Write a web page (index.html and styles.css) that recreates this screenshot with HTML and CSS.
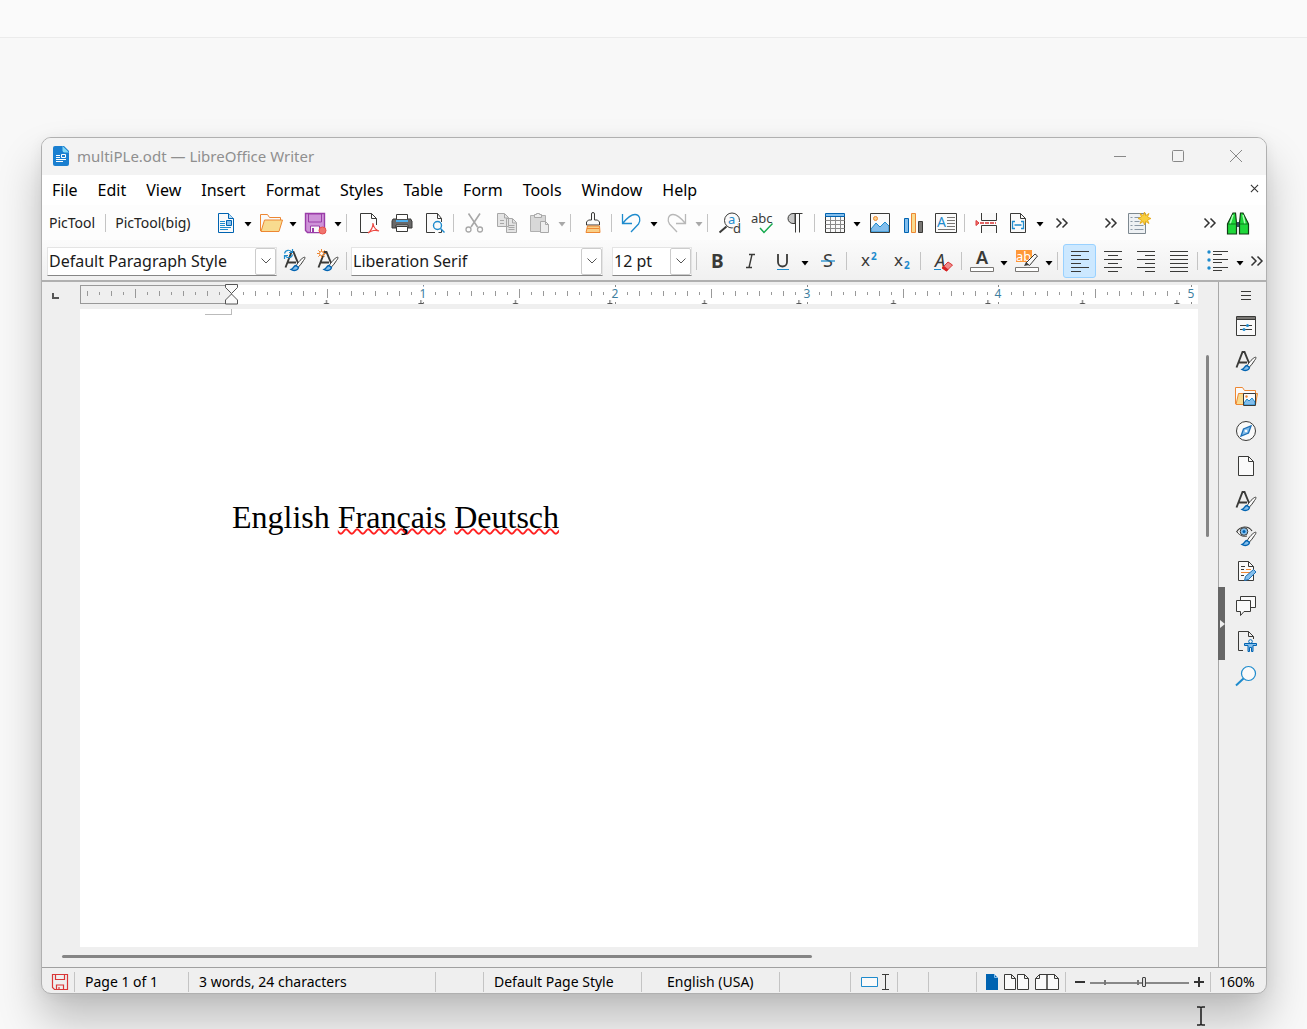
FILE: index.html
```html
<!DOCTYPE html>
<html lang="en">
<head>
<meta charset="utf-8">
<title>multiPLe.odt — LibreOffice Writer</title>
<link rel="stylesheet" href="styles.css">
</head>
<body>
<svg class="sprite" aria-hidden="true">
  <symbol id="down" viewBox="0 0 8 5"><path d="M.5 0h7L4 4.500z" fill="currentColor"/></symbol>
  <symbol id="more" viewBox="0 0 14 12"><path d="M1.500 1.500 6 6l-4.500 4.500M7.500 1.500 12 6l-4.500 4.500" fill="none" stroke="#333" stroke-width="1.500"/></symbol>
  <symbol id="chevron" viewBox="0 0 10 6"><path d="M.5.500 5 5 9.500.500" fill="none" stroke="#555" stroke-width="1"/></symbol>
  <symbol id="brushA" viewBox="0 0 24 24"><path d="M2.500 18.500 8.500 3h2l4.500 11M5 13.500h8" fill="none" stroke="#3a3a38" stroke-width="1.900"/><path d="M13 17c2-4 6-8 8.500-9 .8.500.3 2-1 3.500-1.500 2.500-3.500 5-5.500 7z" fill="#fafafa" stroke="#3a3a38"/><path d="M13 16.500c-2.500 0-2.500 3.500-5 4 2 1.500 7 1.500 7.500-2z" fill="#83beec" stroke="#0063b1" stroke-width="1.300"/></symbol>
</svg>

<header class="desk-strip"></header>
<div class="stage">
<main class="window">
  <div class="titlebar">
    <svg class="app-icon" viewBox="0 0 16 20"><path d="M2 0h9l5 5v13a2 2 0 0 1-2 2H2a2 2 0 0 1-2-2V2a2 2 0 0 1 2-2z" fill="#1a7fd0"/><path d="M9.500 0v4.500a2 2 0 0 0 2 2H16z" fill="#83d8f5"/><path d="M3 9.500h4M3 11.500h4M3 13.500h10M3 15.500h7M8.500 8.500h4v3h-4z" stroke="#fff" fill="none"/></svg>
    <h1>multiPLe.odt — LibreOffice Writer</h1>
    <button class="cap" aria-label="Minimize"><svg viewBox="0 0 14 14"><path d="M1 7.500h12" stroke="#888"/></svg></button>
    <button class="cap" aria-label="Maximize"><svg viewBox="0 0 14 14"><rect x="1.500" y="1.500" width="11" height="11" rx="1" fill="none" stroke="#888"/></svg></button>
    <button class="cap" aria-label="Close"><svg viewBox="0 0 14 14"><path d="m1 1 12 12M13 1 1 13" stroke="#888"/></svg></button>
  </div>

  <nav class="menubar">
    <button>File</button><button>Edit</button><button>View</button><button>Insert</button><button>Format</button><button>Styles</button><button>Table</button><button>Form</button><button>Tools</button><button>Window</button><button>Help</button>
    <button class="close-doc" aria-label="Close document"><svg viewBox="0 0 10 10"><path d="m1 1 8 8M9 1 1 9" stroke="#333" stroke-width="1.200"/></svg></button>
  </nav>

  <div class="toolbar standard">
    <div class="group pics"><button class="word">PicTool</button><i class="sep"></i><button class="word">PicTool(big)</button></div>
    <div class="group">
      <button class="tool" aria-label="New"><svg viewBox="0 0 24 24"><path d="M4.500 2.500h10l5 5v14h-15z" fill="#fafafa" stroke="#0063b1"/><path d="M14.500 2.500v5h5" fill="#b9dcf5" stroke="#0063b1"/><path d="M6 10.500h5M6 12.500h5M6 14.500h5M6 16.500h11M6 18.500h8" stroke="#1e8bcd"/><path d="M12.500 9.500h5v5h-5z" fill="#83beec" stroke="#0063b1"/></svg></button><button class="drop" aria-label="New options"><svg><use href="#down"/></svg></button>
      <button class="tool" aria-label="Open"><svg viewBox="0 0 24 24"><path d="M1.500 20V3.500h7l2 3h11v3" fill="#fafafa" stroke="#ed8733"/><path d="m2 20.500 3.500-11.500h18L20 20.500z" fill="#f8db8f" stroke="#ed8733"/></svg></button><button class="drop" aria-label="Open options"><svg><use href="#down"/></svg></button>
      <button class="tool" aria-label="Save"><svg viewBox="0 0 24 24"><path d="M1.500 2.500h19v19h-17l-2-2z" fill="#ce93d8" stroke="#9a3da8" stroke-width="1.400"/><path d="M4.500 3h13v8h-13z" fill="#ce93d8" stroke="#9a3da8"/><path d="M6.500 15h9v6.500h-9z" fill="#fafafa" stroke="#9a3da8"/><path d="M9 17v4" stroke="#9a3da8" stroke-width="2"/><circle cx="18.500" cy="19.500" r="3.500" fill="#f0756f" stroke="#e8504a"/></svg></button><button class="drop" aria-label="Save options"><svg><use href="#down"/></svg></button>
      <i class="sep wide"></i>
      <button class="tool" aria-label="Export as PDF"><svg viewBox="0 0 24 24"><path d="M11 21.500H3.500v-19h11l5 5V14M14.500 2.500v5h5" fill="none" stroke="#3a3a38"/><path d="M11 22c4-3 5-6 5-10 .5 5 3 7 6 8-3-1.500-8-.5-11 2z" fill="none" stroke="#ed4a44" stroke-width="1.200"/></svg></button>
      <button class="tool" aria-label="Print"><svg viewBox="0 0 24 24"><path d="M3 8h18v1l1 1v7h-4v-3H6v3H2v-7z" fill="#696969" stroke="#3a3a38"/><path d="M6.500 8V3.500h11V8" fill="#fff" stroke="#3a3a38"/><path d="M6 9h12v2H6z" fill="#4fb0ee"/><path d="M6.500 15.500h11v5h-11z" fill="#fff" stroke="#3a3a38"/></svg></button>
      <button class="tool" aria-label="Print preview"><svg viewBox="0 0 24 24"><path d="M12 21.500H3.500v-19h11l4 5V11M14.500 2.500v5h4M18.500 19v2.500h-3" fill="#fafafa" stroke="#3a3a38"/><circle cx="14.500" cy="14.500" r="4" fill="#fafafa" stroke="#1e8bcd" stroke-width="1.400"/><path d="m17.500 17.500 4 4" stroke="#1e8bcd" stroke-width="1.400"/></svg></button>
      <i class="sep"></i>
      <button class="tool" aria-label="Cut" disabled><svg viewBox="0 0 24 24"><path d="m6.500 2.500 9 13.500M18 2.500 9 16" stroke="#a8a8a8" stroke-width="1.600"/><circle cx="6.500" cy="18.500" r="2.500" fill="none" stroke="#a8a8a8" stroke-width="1.300"/><circle cx="18" cy="18.500" r="2.500" fill="none" stroke="#a8a8a8" stroke-width="1.300"/></svg></button>
      <button class="tool" aria-label="Copy" disabled><svg viewBox="0 0 24 24"><path d="M2.500 2.500h7l4 4v9h-11zM11.500 7.500h6l4 4v10h-10z" fill="#e4e4e4" stroke="#a8a8a8"/><path d="M9.500 3v4h4M17.500 8v4h4M5 9.500h4M5 12.500h4M13.500 14.500h6M13.500 16.500h6M13.500 18.500h6" fill="none" stroke="#a8a8a8"/></svg></button>
      <button class="tool" aria-label="Paste" disabled><svg viewBox="0 0 24 24"><path d="M2.500 4.500h15v16h-15z" fill="#d8d8d8" stroke="#b0b0b0"/><path d="M6.500 6.500v-3h2v-1h3v1h2v3zM12.500 10.500h5l3 3v8h-8z" fill="#eee" stroke="#a8a8a8"/><path d="M17.500 10.500v3h3" fill="none" stroke="#a8a8a8"/></svg></button><button class="drop" aria-label="Paste options" disabled><svg><use href="#down"/></svg></button>
      <i class="sep wide"></i>
      <button class="tool" aria-label="Clone formatting"><svg viewBox="0 0 24 24"><path d="M10.500 9V3a1.500 1.500 0 0 1 3 0v6h3l2 2v3h-13v-3l2-2z" fill="#fafafa" stroke="#3a3a38"/><path d="M6.500 15h12l.5 6.500H5z" fill="#f9cf87" stroke="#ed8733"/><path d="M6 17.500h12" stroke="#ed8733"/></svg></button>
      <i class="sep"></i>
      <button class="tool" aria-label="Undo"><svg viewBox="0 0 24 24"><path d="M2.500 3v9.500H12M2.500 12.500C7 7 11 3.500 15 3.500c5 0 6 6 3.500 9.500L11 21" fill="none" stroke="#1e8bcd" stroke-width="1.300"/></svg></button><button class="drop" aria-label="Undo history"><svg><use href="#down"/></svg></button>
      <button class="tool" aria-label="Redo" disabled><svg viewBox="0 0 24 24"><path d="M20.500 3v9.500H11M20.500 12.500C16 7 12 3.500 8 3.500c-5 0-6 6-3.500 9.500L12 21" fill="none" stroke="#b8b8b8" stroke-width="1.300"/></svg></button><button class="drop" aria-label="Redo history" disabled><svg><use href="#down"/></svg></button>
      <i class="sep wide"></i>
      <button class="tool" aria-label="Find and replace"><svg viewBox="0 0 24 24"><circle cx="14" cy="9.500" r="7.500" fill="#fafafa" stroke="#3a3a38"/><path d="m8.500 15.500-7 6" stroke="#3a3a38" stroke-width="2"/><text x="10" y="13" font-size="13" fill="#1e8bcd">a</text><text x="15" y="22" font-size="13" fill="#3a3a38" stroke="#fafafa" stroke-width="2" paint-order="stroke">d</text></svg></button>
      <button class="tool" aria-label="Spelling"><svg viewBox="0 0 24 24"><text x="0" y="12" font-size="13" fill="#3a3a38">abc</text><path d="m9 17 4 4.500 8.500-9" fill="none" stroke="#18ab50" stroke-width="1.500"/></svg></button>
      <button class="tool" aria-label="Formatting marks"><svg viewBox="0 0 24 24"><path d="M11 2.500H9a5 5 0 0 0 0 10h2z" fill="#c8c8c8" stroke="#3a3a38"/><path d="M9 2.500h9.500M11.500 2.500v19M15.500 2.500v19" stroke="#3a3a38"/></svg></button>
      <i class="sep"></i>
      <button class="tool" aria-label="Insert table"><svg viewBox="0 0 24 24"><path d="M2.500 3.500h19v18h-19z" fill="#fafafa" stroke="#3a3a38"/><path d="M2.500 9.500h19M2.500 13.500h19M2.500 17.500h19M7.500 6v15M12.500 6v15M17.500 6v15" stroke="#8a8a8a"/><path d="M2.500 2.500h19v3h-19z" fill="#83beec" stroke="#0063b1"/></svg></button><button class="drop" aria-label="Table size"><svg><use href="#down"/></svg></button>
      <button class="tool" aria-label="Insert image"><svg viewBox="0 0 24 24"><path d="M2.500 2.500h19v19h-19z" fill="#fafafa"/><path d="m3 18 5-6 4 4 5-5 4 4v6H3z" fill="#83beec" stroke="#1e8bcd"/><circle cx="7.500" cy="7.500" r="2" fill="#f9cf87" stroke="#ed8733"/><path d="M2.500 2.500h19v19h-19z" fill="none" stroke="#3a3a38"/></svg></button>
      <button class="tool" aria-label="Insert chart"><svg viewBox="0 0 24 24"><path d="M3.500 7.500h4v14h-4z" fill="#83beec" stroke="#0063b1"/><path d="M10.500 2.500h4v19h-4z" fill="#f8db8f" stroke="#ed8733"/><path d="M17.500 10.500h4v11h-4z" fill="#797774" stroke="#3a3a38"/></svg></button>
      <button class="tool" aria-label="Insert text box"><svg viewBox="0 0 24 24"><path d="M1.500 2.500h21v19h-21z" fill="#fafafa" stroke="#3a3a38"/><text x="3" y="16" font-size="14" fill="#1e8bcd">A</text><path d="M13 6.500h8M13 9.500h8M13 12.500h8M13 15.500h8M4 18.500h17" stroke="#797774"/></svg></button>
      <i class="sep"></i>
      <button class="tool" aria-label="Insert page break"><svg viewBox="0 0 24 24"><path d="M8.500 2v7.500h15V2M8.500 22v-7.500h15V22" fill="#fafafa" stroke="#3a3a38"/><path d="M7 12h16" stroke="#d93636" stroke-width="1.500" stroke-dasharray="4 1"/><path d="m3 9.500 3 2.500-3 2.500z" fill="#f27a7a" stroke="#d93636"/></svg></button>
      <button class="tool" aria-label="Insert field"><svg viewBox="0 0 24 24"><path d="M4.500 2.500h10l5 5v14h-15z" fill="#fafafa" stroke="#3a3a38"/><path d="M14.500 2.500v5h5" fill="none" stroke="#3a3a38"/><path d="M9 10.500H6.500v7H9M15 10.500h2.500v7H15M8.500 14h7" fill="none" stroke="#1e8bcd" stroke-width="1.300"/></svg></button><button class="drop" aria-label="Field options"><svg><use href="#down"/></svg></button>
      <button class="over" aria-label="More"><svg><use href="#more"/></svg></button>
    </div>
    <div class="group second">
      <button class="over" aria-label="More"><svg><use href="#more"/></svg></button>
      <button class="tool" aria-label="Autotext"><svg viewBox="0 0 24 24"><path d="M1.500 2.500h17v20h-17z" fill="#eef1f4" stroke="#7d8890"/><path d="M3.500 6.500h2M3.500 10.500h2M3.500 14.500h2M3.500 18.500h2M7.500 6.500h6M7.500 10.500h5M7.500 14.500h9M7.500 18.500h9" stroke="#8c99a6"/><path d="m17.500 1 1.200 3.500L22 2.500l-1.500 3.500 3.500 1.500-3.500 1.500L22 12.500l-3.300-2L17.500 14l-1.200-3.500-3.300 2L14.500 9 11 7.500 14.500 6 13 2.500l3.300 2z" fill="#f9cf3c" stroke="#e5a50a" stroke-width=".8"/></svg></button>
    </div>
    <div class="group last">
      <button class="over" aria-label="More"><svg><use href="#more"/></svg></button>
      <button class="tool" aria-label="Find"><svg viewBox="0 0 24 24"><path d="M10 11h4v5h-4z" fill="#3c4a6a"/><path d="M7 2h2.500l1 10v11H1.500V13zM17 2h-2.500l-1 10v11h9V13z" fill="#1fd83a" stroke="#123d16" stroke-width="1.200"/><path d="m7 4-3 9M17 4l2 9" stroke="#a9ffb2" stroke-width="1.500"/><path d="M2 13h8M14 13h8" stroke="#0b7a1c"/></svg></button>
    </div>
  </div>

  <div class="toolbar format">
    <label class="combo style"><select aria-label="Paragraph style"><option>Default Paragraph Style</option></select><span><svg><use href="#chevron"/></svg></span></label>
    <button class="tool" aria-label="Update style"><svg viewBox="0 0 24 24"><use href="#brushA"/><path d="M1.500 4.500C2.500.5 7 .5 8.500 3M9.500 0v3.500H6M9.500 5.500c-1 4-5.500 4-7 1.500M1.500 10V6.500H5" fill="none" stroke="#1e8bcd" stroke-width="1.200"/></svg></button>
    <button class="tool" aria-label="New style"><svg viewBox="0 0 24 24"><use href="#brushA"/><path d="M5.500 0v9M1 4.500h9M2.300 1.300l6.400 6.400M8.700 1.300 2.300 7.700" stroke="#ed8733"/><circle cx="5.500" cy="4.500" r="2" fill="#fafafa" stroke="#ed8733"/></svg></button>
    <i class="sep"></i>
    <label class="combo font"><select aria-label="Font name"><option>Liberation Serif</option></select><span><svg><use href="#chevron"/></svg></span></label>
    <label class="combo size"><select aria-label="Font size"><option>12 pt</option></select><span><svg><use href="#chevron"/></svg></span></label>
    <i class="sep"></i>
    <button class="tool" aria-label="Bold"><svg viewBox="0 0 24 24"><text x="6" y="19" font-size="19" font-weight="700" fill="#3a3a38">B</text></svg></button>
    <button class="tool" aria-label="Italic"><svg viewBox="0 0 24 24"><path d="M11 5.500h6M8 18.500h6M14 5.500l-3 13" fill="none" stroke="#3a3a38" stroke-width="1.400"/></svg></button>
    <button class="tool" aria-label="Underline"><svg viewBox="0 0 24 24"><path d="M7 5v8c0 6 9 6 9 0V5" fill="none" stroke="#3a3a38" stroke-width="1.800"/><path d="M6 20.500h12" stroke="#1e8bcd"/></svg></button><button class="drop" aria-label="Underline styles"><svg><use href="#down"/></svg></button>
    <button class="tool" aria-label="Strikethrough"><svg viewBox="0 0 24 24"><text x="7" y="18" font-size="18" fill="#3a3a38">S</text><path d="M5 12h14" stroke="#1e8bcd" stroke-width="1.300"/></svg></button>
    <i class="sep wide"></i>
    <button class="tool" aria-label="Superscript"><svg viewBox="0 0 24 24"><text x="4" y="17" font-size="17" fill="#3a3a38">x</text><text x="14" y="11" font-size="10" font-weight="700" fill="#1e8bcd">2</text></svg></button>
    <button class="tool" aria-label="Subscript"><svg viewBox="0 0 24 24"><text x="4" y="17" font-size="17" fill="#3a3a38">x</text><text x="14" y="20" font-size="10" font-weight="700" fill="#1e8bcd">2</text></svg></button>
    <i class="sep wide"></i>
    <button class="tool" aria-label="Clear formatting"><svg viewBox="0 0 24 24"><text x="4" y="18" font-size="18" font-style="italic" fill="#3a3a38">A</text><path d="M3 20.500h7" stroke="#1e8bcd"/><path d="m11 19 6-6 4.500 3-6 6z" fill="#f08a8a" stroke="#d93636"/><path d="m11 19 2-2 4.500 3.500-2 2z" fill="#d62020"/></svg></button>
    <i class="sep"></i>
    <button class="tool" aria-label="Font color"><svg viewBox="0 0 24 24"><text x="6" y="15" font-size="18" font-weight="600" fill="#3a3a38">A</text><path d="M.5 18.500h23v4H.5z" fill="#fff" stroke="#797774"/></svg></button><button class="drop" aria-label="Font colors"><svg><use href="#down"/></svg></button>
    <button class="tool" aria-label="Highlighting"><svg viewBox="0 0 24 24"><path d="M1 1h16v12H1z" fill="#ff9838"/><text x="1" y="12" font-size="13" fill="#fff">ab</text><path d="m11 14 9-9 2.500 2-8 9.500z" fill="#fafafa" stroke="#3a3a38"/><path d="m9 17 2-4 3 3z" fill="#3a3a38"/><path d="M.5 18.500h23v4H.5z" fill="#fff" stroke="#797774"/></svg></button><button class="drop" aria-label="Highlight colors"><svg><use href="#down"/></svg></button>
    <i class="sep wide"></i>
    <button class="tool on" aria-label="Align left" aria-pressed="true"><svg viewBox="0 0 24 24"><path d="M3 2.500h18M3 6.500h10M3 10.500h18M3 14.500h10M3 18.500h18M3 22.500h10" stroke="#3a3a38"/></svg></button>
    <button class="tool" aria-label="Center"><svg viewBox="0 0 24 24"><path d="M3 2.500h18M7 6.500h10M3 10.500h18M7 14.500h10M3 18.500h18M7 22.500h10" stroke="#3a3a38"/></svg></button>
    <button class="tool" aria-label="Align right"><svg viewBox="0 0 24 24"><path d="M3 2.500h18M11 6.500h10M3 10.500h18M11 14.500h10M3 18.500h18M11 22.500h10" stroke="#3a3a38"/></svg></button>
    <button class="tool" aria-label="Justify"><svg viewBox="0 0 24 24"><path d="M3 2.500h18M3 6.500h18M3 10.500h18M3 14.500h18M3 18.500h18M3 22.500h18" stroke="#3a3a38"/></svg></button>
    <i class="sep"></i>
    <button class="tool" aria-label="Bullets"><svg viewBox="0 0 24 24"><path d="M7 2.500h15M7 5.500h9M7 10.500h15M7 13.500h9M7 18.500h15M7 21.500h9" stroke="#3a3a38"/><g fill="#1e8bcd"><circle cx="3" cy="3" r="1.700"/><circle cx="3" cy="11" r="1.700"/><circle cx="3" cy="19" r="1.700"/></g></svg></button><button class="drop" aria-label="Bullet styles"><svg><use href="#down"/></svg></button>
    <button class="over" aria-label="More"><svg><use href="#more"/></svg></button>
  </div>

  <div class="work">
    <section class="editor">
      <div class="ruler-row">
        <button class="tab-kind" aria-label="Tab type"><svg viewBox="0 0 8 8"><path d="M2 1v5h6" fill="none" stroke="#555" stroke-width="2"/></svg></button>
        <svg class="ruler">
          <defs>
            <pattern id="ticks" x="151" y="0" width="192" height="26" patternUnits="userSpaceOnUse">
              <path d="M12.500 10v3M36.500 10v3M60.500 10v3M84.500 10v3M108.500 10v3M132.500 10v3M156.500 10v3M180.500 10v3M24.500 9v5M48.500 9v5M72.500 9v5M120.500 9v5M144.500 9v5M168.500 9v5M96.500 7v9" stroke="#999"/>
            </pattern>
            <pattern id="tabs" x="199" y="0" width="94.500" height="26" patternUnits="userSpaceOnUse">
              <path d="M47.500 18v3M45 21.500h5" stroke="#555"/>
            </pattern>
          </defs>
          <rect x="0" y="3" width="100%" height="19" fill="#fff"/>
          <rect x=".5" y="3.500" width="151" height="18" fill="#efefef" stroke="#999"/>
          <rect x="2" y="0" width="100%" height="26" fill="url(#ticks)"/>
          <rect x="199" y="0" width="100%" height="26" fill="url(#tabs)"/>
          <path d="M343.500 3v2M343.500 20v2M535.500 3v2M535.500 20v2M727.500 3v2M727.500 20v2M918.500 3v2M918.500 20v2M1111.500 3v2M1111.500 20v2" stroke="#888"/>
          <g class="nums"><text x="343" y="16">1</text><text x="535" y="16">2</text><text x="727" y="16">3</text><text x="918" y="16">4</text><text x="1111" y="16">5</text></g>
          <path d="M145.500 2.500h12v3l-6 6-6-6zM151.500 12l6 6v4h-12v-4z" fill="#fafafa" stroke="#555"/>
        </svg>
      </div>
      <div class="canvas">
        <article class="page"><i class="corner"></i><p>English <span class="bad">Français</span> <span class="bad">Deutsch</span></p></article>
        <div class="vscroll"><i></i></div>
      </div>
      <div class="hscroll"><i></i></div>
    </section>
    <aside class="sidebar">
      <button class="grab" aria-label="Hide sidebar"><svg viewBox="0 0 6 8"><path d="M1 0v8l5-4z" fill="#eee"/></svg></button>
      <button class="burger" aria-label="Sidebar settings"><svg viewBox="0 0 24 24"><path d="M7 8.500h10M7 12.500h10M7 16.500h10" stroke="#3a3a38"/></svg></button>
      <button aria-label="Properties"><svg viewBox="0 0 24 24"><path d="M2.500 2.500h19v19h-19z" fill="#fafafa" stroke="#3a3a38"/><path d="M3 3h18v2.500H3z" fill="#797774"/><path d="M2 5.500h20M6 11.500h12M6 15.500h12" stroke="#3a3a38"/><circle cx="13.500" cy="11.500" r="1.500" fill="#1e8bcd"/><circle cx="10" cy="15.500" r="1.500" fill="#1e8bcd"/></svg></button>
      <button aria-label="Styles"><svg><use href="#brushA"/></svg></button>
      <button aria-label="Gallery"><svg viewBox="0 0 24 24"><path d="M1.500 20V3.500h7l2 3h11v3" fill="#fafafa" stroke="#ed8733"/><path d="M2 20.500 4.500 9.500h19l-2 11z" fill="#f8db8f" stroke="#ed8733"/><path d="M9.500 9.500h12v12h-12z" fill="#fafafa"/><path d="m10 19 3-4 2 2 3-3 3 4v3H10z" fill="#83beec" stroke="#1e8bcd"/><circle cx="12.500" cy="12.500" r="1.200" fill="#ed8733"/><path d="M9.500 9.500h12v12h-12z" fill="none" stroke="#3a3a38"/></svg></button>
      <button aria-label="Navigator"><svg viewBox="0 0 24 24"><circle cx="12" cy="12" r="9.500" fill="#fafafa" stroke="#3a3a38"/><path d="m17 7-2.500 7L7 17l2.500-7z" fill="#83beec" stroke="#1e6fb5" stroke-width="1.300"/><circle cx="12" cy="12" r="1.300" fill="#fafafa"/></svg></button>
      <button aria-label="Page"><svg viewBox="0 0 24 24"><path d="M4.500 2.500h10l5 5v14h-15z" fill="#fafafa" stroke="#3a3a38"/><path d="M14.500 2.500v5h5" fill="none" stroke="#3a3a38"/></svg></button>
      <button aria-label="Character styles"><svg><use href="#brushA"/></svg></button>
      <button aria-label="Style inspector"><svg viewBox="0 0 24 24"><path d="M2.500 8c4-6.500 12-6.500 15.500-1" fill="none" stroke="#3a3a38" stroke-width="1.200"/><path d="M3 8c3 4 7 5 10 4" fill="none" stroke="#3a3a38"/><circle cx="10" cy="7.500" r="3.800" fill="#83beec" stroke="#3a3a38"/><circle cx="10" cy="7.500" r="1.500" fill="#0063b1"/><path d="M13 17c2-4 6-8 8.500-9 .8.500.3 2-1 3.500-1.500 2.500-3.500 5-5.500 7z" fill="#fafafa" stroke="#3a3a38"/><path d="M13 16.500c-2.500 0-2.500 3.500-5 4 2 1.500 7 1.500 7.500-2z" fill="#83beec" stroke="#0063b1" stroke-width="1.300"/></svg></button>
      <button aria-label="Manage changes"><svg viewBox="0 0 24 24"><path d="M4.500 2.500h10l5 5v14h-15z" fill="#fafafa" stroke="#3a3a38"/><path d="M14.500 2.500v5h5M7 7.500h4M7 10.500h3M7 16.500h3" fill="none" stroke="#3a3a38"/><path d="M12 10.500h5M7 13.500h9" stroke="#ed8733"/><path d="m10.500 21.500 1-4 8-7 2.500 2.500-7.500 7.500z" fill="#83beec" stroke="#1e6fb5"/></svg></button>
      <button aria-label="Comments"><svg viewBox="0 0 24 24"><path d="M6.500 6V2.500h15v11h-5" fill="#fafafa" stroke="#3a3a38"/><path d="M2.500 6.500h14v11H10l-3.500 4v-4h-4z" fill="#fafafa" stroke="#3a3a38"/></svg></button>
      <button aria-label="Accessibility check"><svg viewBox="0 0 24 24"><path d="M9 21.500H4.500v-19h10l5 5V10M14.500 2.500v5h5" fill="none" stroke="#3a3a38"/><circle cx="16.500" cy="12.500" r="1.800" fill="#fafafa" stroke="#0063b1"/><path d="M10.500 14.500h12v2h-3.500v6h-1.500v-4h-2v4H14v-6h-3.500z" fill="#83beec" stroke="#0063b1"/></svg></button>
      <button aria-label="Find"><svg viewBox="0 0 24 24"><circle cx="14.500" cy="9.500" r="7" fill="#fafafa" stroke="#1e8bcd" stroke-width="1.200"/><path d="m9.500 14.500-7.500 7" stroke="#1e8bcd" stroke-width="2"/></svg></button>
    </aside>
  </div>

  <footer class="status">
    <div class="cell save"><svg viewBox="0 0 16 16"><path d="M.5.500h15v15h-13l-2-2zM3.500.5v5h9v-5M4.500 15.500v-4.500h7v4.500M7 13v2" fill="none" stroke="#d93636" stroke-width="1.200"/></svg></div>
    <div class="cell pageno">Page 1 of 1</div>
    <div class="cell words">3 words, 24 characters</div>
    <div class="cell blank"></div>
    <div class="cell pstyle">Default Page Style</div>
    <div class="cell lang">English (USA)</div>
    <div class="cell mode"></div>
    <div class="cell select"><svg viewBox="0 0 28 18"><path d="M.5 4.500h16v9H.5z" fill="#fafafa" stroke="#1e8bcd"/><path d="M21 1.500h7M21 16.500h7M24.500 1.500v15" stroke="#3a3a38" fill="none"/></svg></div>
    <div class="cell sign"></div>
    <div class="cell sig2"></div>
    <div class="cell views">
      <button aria-label="Single page"><svg width="12" viewBox="0 0 12 16"><path d="M0 0h8l4 4v12H0z" fill="#0063b1"/><path d="M8.500 0v3.500H12" stroke="#83beec" fill="none"/></svg></button>
      <button aria-label="Multiple pages"><svg width="25" viewBox="0 0 25 16"><path d="M.5.500h7l4 4v11H.5zM7.500.5v4h4M13.500.5h7l4 4v11h-11zM20.500.5v4h4" fill="#fafafa" stroke="#3a3a38"/></svg></button>
      <button aria-label="Book view"><svg width="24" viewBox="0 0 24 16"><path d="M12 .5H4.500l-4 4v11H12zM4.500.5v4h-4M12 .5h7.500l4 4v11H12zM19.500.5v4h4" fill="#fafafa" stroke="#3a3a38"/></svg></button>
    </div>
    <div class="cell zoom">
      <button aria-label="Zoom out"><svg width="10" viewBox="0 0 10 10"><path d="M0 5h10" stroke="#333" stroke-width="2"/></svg></button>
      <input type="range" min="0" max="100" value="55" aria-label="Zoom">
      <button aria-label="Zoom in"><svg width="10" viewBox="0 0 10 10"><path d="M0 5h10M5 0v10" stroke="#333" stroke-width="2"/></svg></button>
    </div>
    <div class="cell pct">160%</div>
  </footer>
</main>
</div>
<svg class="pointer" viewBox="0 0 8 20" aria-hidden="true"><path d="M0 1h3l1 1 1-1h3M0 19h3l1-1 1 1h3M4 1v18" fill="none" stroke="#222" stroke-width="1.600"/></svg>
</body>
</html>
```
FILE: styles.css
```css
* { box-sizing: border-box; }
body {
  margin: 0;
  min-height: 100vh;
  display: flex;
  flex-direction: column;
  background: #f8f8f8;
  font-family: "Noto Sans", sans-serif;
  font-size: 16px;
  color: #000;
  position: relative;
  overflow: hidden;
}
button {
  border: 0;
  padding: 0;
  background: none;
  font: inherit;
  color: inherit;
}
svg { display: block; overflow: visible; }
.sprite { position: absolute; width: 0; height: 0; }
.desk-strip { height: 38px; background: #fafafa; border-bottom: 1px solid #ebebeb; }
.stage { flex: 1; display: flex; padding: 99px 40px 35px 41px; }
.window {
  flex: 1;
  min-width: 0;
  display: flex;
  flex-direction: column;
  background: #efefef;
  border: 1px solid #b0b0b0;
  border-radius: 10px;
  box-shadow: 0 26px 44px rgba(0, 0, 0, .24), 0 2px 14px rgba(0, 0, 0, .06);
  overflow: hidden;
}

/* title bar */
.titlebar {
  height: 37px;
  display: flex;
  align-items: center;
  background: #f3f3f3;
  padding: 0 1px 2px 11px;
}
.app-icon { width: 16px; height: 20px; }
.titlebar h1 {
  flex: 1;
  margin: 0 0 0 8px;
  font-size: 15px;
  font-weight: 400;
  color: #8f8f8f;
}
.cap { width: 58px; height: 35px; display: grid; place-items: center; }
.cap svg { width: 14px; height: 14px; }

/* menu bar */
.menubar {
  height: 30px;
  display: flex;
  align-items: center;
  background: #fff;
}
.menubar button { padding: 0 10px; }
.menubar .close-doc { margin-left: auto; padding: 0 7px 4px; }
.close-doc svg { width: 9px; height: 9px; }

/* tool bars */
.toolbar { display: flex; align-items: center; }
.standard { height: 35px; background: #fdfdfd; padding-right: 12px; }
.format {
  height: 42px;
  padding: 2px 0 0 5px;
  background: linear-gradient(#fbfbfb, #f0f0f0);
  border-bottom: 2px solid #b0b0b0;
}
.group { display: flex; align-items: center; flex: none; }
.pics { width: 167px; }
.pics .sep { margin: 0 -1px 0 1px; }
.second { margin-left: 22px; }
.last { margin-left: auto; }
.word { padding: 0 7px; font-size: 14px; color: #222; }
.tool { width: 33px; height: 34px; display: grid; place-items: center; flex: none; }
.tool svg, .sidebar svg { width: 24px; height: 24px; }
.tool.on { background: #cce8ff; border: 1px solid #99d1ff; border-radius: 3px; }
.drop { width: 12px; height: 34px; display: grid; place-items: center; flex: none; }
.drop svg { width: 8px; height: 5px; margin-top: 4px; }
.drop:disabled { color: #a8a8a8; }
.over { width: 22px; height: 34px; display: grid; place-items: center; flex: none; }
.over svg { width: 14px; height: 12px; }
.standard .drop + .over { width: 32px; }
.sep { flex: none; width: 6px; height: 18px; padding-left: 2px; }
.sep::before { content: ""; display: block; width: 1px; height: 100%; background: #c4c4c4; }
.sep.wide { width: 8px; }
.combo {
  flex: none;
  display: flex;
  height: 29px;
  background: #fff;
  border: 1px solid #e4e4e4;
  border-bottom: 1px solid #868686;
}
.combo select {
  flex: 1;
  min-width: 0;
  appearance: none;
  border: 0;
  padding: 0 1px;
  background: none;
  font: inherit;
  color: #1a1a1a;
}
.combo span {
  width: 21px;
  display: grid;
  place-items: center;
  border: 1px solid #ccc;
  border-radius: 2px;
}
.combo svg { width: 10px; height: 6px; }
.style { width: 230px; margin-right: 1px; }
.font { width: 252px; margin: 0 9px 0 1px; }
.size { width: 80px; margin-right: 2px; }

/* document area */
.work { flex: 1; display: flex; }
.editor { flex: 1; min-width: 0; display: flex; flex-direction: column; }
.ruler-row { height: 27px; display: flex; }
.tab-kind { width: 38px; padding: 0 0 0 9px; }
.tab-kind svg { width: 8px; height: 8px; }
.ruler { flex: 1; min-width: 0; height: 26px; margin-right: 20px; overflow: hidden; }
.nums text { font-size: 12px; text-anchor: middle; fill: #3f7f9f; stroke: #fff; stroke-width: 4px; paint-order: stroke; }
.canvas { flex: 1; display: flex; padding-left: 38px; }
.page { flex: 1; background: #fff; position: relative; padding: 190px 24px 24px 152px; }
.corner {
  position: absolute;
  left: 125px;
  top: 0;
  width: 27px;
  height: 6px;
  border: solid #bbb;
  border-width: 0 1px 1px 0;
}
.page p {
  margin: 0;
  font: 32px/37px "Liberation Serif", serif;
}
.bad { text-decoration: underline wavy #f22 2px; text-decoration-skip-ink: none; text-underline-offset: 0; }
.vscroll { width: 20px; padding: 46px 8px 0; }
.vscroll i { display: block; width: 3px; height: 182px; border-radius: 2px; background: #858585; }
.hscroll { height: 20px; padding: 8px 20px; }
.hscroll i { display: block; width: 66%; height: 3px; border-radius: 2px; background: #858585; }

/* sidebar */
.sidebar {
  position: relative;
  width: 48px;
  border-left: 1px solid #a8a8a8;
  padding-left: 7px;
  display: flex;
  flex-direction: column;
}
.sidebar button { height: 35px; display: grid; place-items: center; }
.sidebar .burger { height: 26px; }
.sidebar .grab {
  position: absolute;
  left: -1px;
  top: 305px;
  width: 7px;
  height: 73px;
  background: #666;
}
.sidebar .grab svg { width: 6px; height: 8px; }

/* status bar */
.status {
  height: 26px;
  display: flex;
  align-items: center;
  border-top: 1px solid #a0a0a0;
  padding-top: 2px;
  font-size: 14px;
  line-height: 20px;
}
.cell {
  flex: none;
  height: 20px;
  display: flex;
  align-items: center;
  border-left: 1px solid #c4c4c4;
  padding-left: 10px;
  white-space: nowrap;
}
.save { width: 32px; border: 0; }
.save svg { width: 16px; height: 16px; }
.pageno { width: 114px; }
.words { flex: 1; }
.blank { width: 48px; }
.pstyle { width: 158px; }
.lang { width: 138px; padding-left: 25px; }
.mode { width: 71px; }
.select { width: 47px; }
.select svg { width: 28px; height: 18px; }
.sign { width: 31px; }
.sig2 { width: 48px; }
.views { width: 89px; padding-left: 9px; gap: 6px; }
.views svg { height: 16px; }
.zoom { width: 145px; padding-left: 9px; gap: 5px; }
.zoom svg { height: 10px; }
.zoom input {
  appearance: none;
  width: 99px;
  height: 12px;
  margin: 0;
  background:
    linear-gradient(#777, #777) 14px 4px / 2px 5px no-repeat,
    linear-gradient(#777, #777) 47px 4px / 2px 5px no-repeat,
    linear-gradient(#888, #888) 0 6px / 100% 2px no-repeat;
}
.zoom input::-webkit-slider-thumb {
  appearance: none;
  width: 4px;
  height: 10px;
  border: 1px solid #444;
  border-radius: 1px;
  background: #ddd;
}
.pct { width: 56px; padding-left: 8px; }

.pointer { position: absolute; right: 102px; bottom: 3px; width: 8px; height: 20px; }
```
